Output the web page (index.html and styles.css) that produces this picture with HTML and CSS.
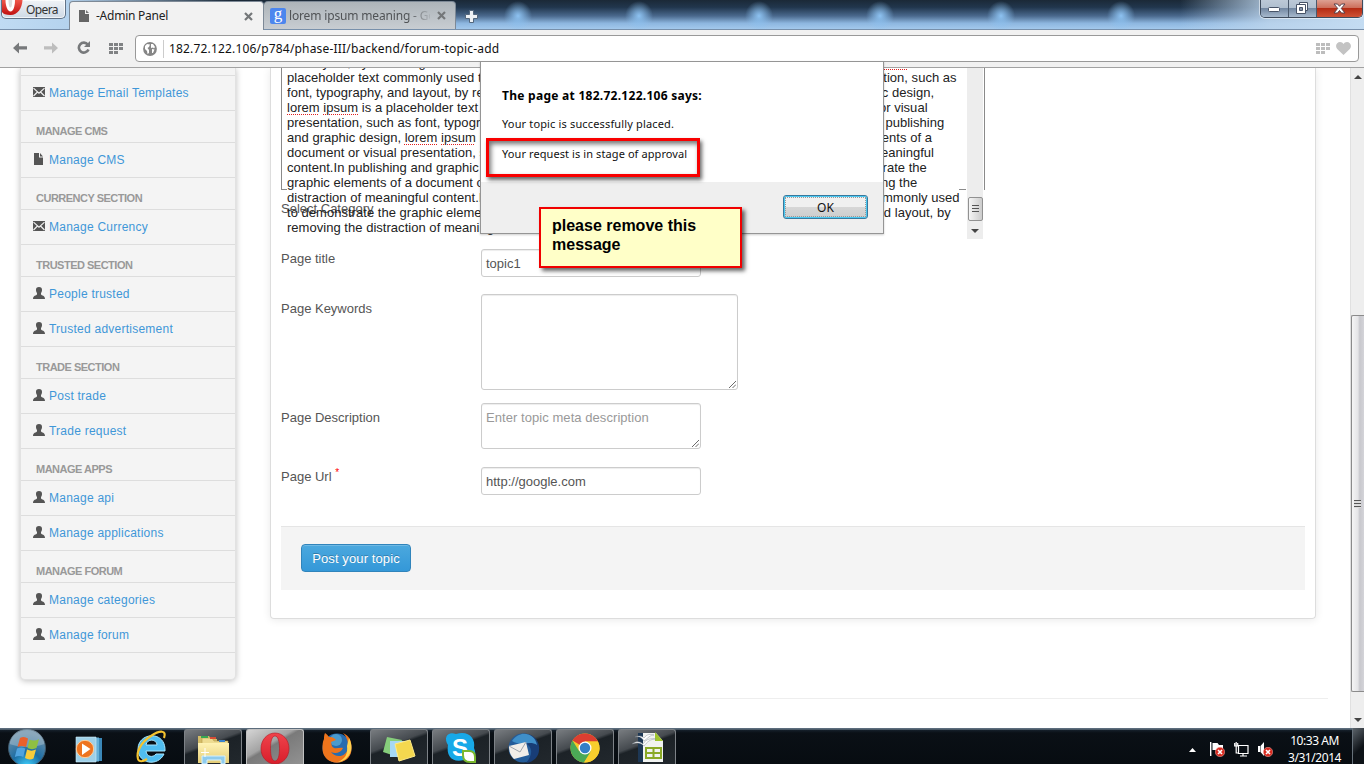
FILE: index.html
```html
<!DOCTYPE html>
<html lang="en">
<head>
<meta charset="utf-8">
<title>-Admin Panel</title>
<link rel="stylesheet" href="styles.css">
</head>
<body>
<svg class="defs" width="0" height="0">
  <defs>
    <symbol id="user" viewBox="0 0 12 12"><path d="M6 0C8 0 9.200 1 9 3c0 1.500-.5 2.300-1 3v1.500c.7 1 4 1 4 4.500H0c0-3.500 3.300-3.500 4-4.500V6c-.5-.7-1-1.500-1-3C2.800 1 4 0 6 0z"/></symbol>
    <symbol id="mail" viewBox="0 0 12 10"><path d="M0 0h12v10H0z"/><path d="M.5 1.200L6 6.200l5.500-5M.5 9l4-4M11.500 9l-4-4" stroke="#f4f4f4" stroke-width="1.100" fill="none"/></symbol>
    <symbol id="file" viewBox="0 0 12 12"><path d="M1 0h5v4.500h4V12H1z"/><path d="M7 0l3 3.500H7z"/></symbol>
    <symbol id="grid" viewBox="0 0 14 11"><path d="M0 0h4v3H0zM5 0h4v3H5zM10 0h4v3h-4zM0 4h4v3H0zM5 4h4v3H5zM10 4h4v3h-4zM0 8h4v3H0zM5 8h4v3H5z"/></symbol>
    <symbol id="close" viewBox="0 0 9 9"><path d="M1 1l7 7M8 1L1 8" stroke="#747779" stroke-width="2.200"/></symbol>
    <symbol id="bad" viewBox="0 0 10 10"><circle cx="5" cy="5" r="4.700" fill="#d92b20" stroke="#f5b5ae" stroke-width=".5"/><path d="M3 3l4 4M7 3L3 7" stroke="#fff" stroke-width="1.600"/></symbol>
    <linearGradient id="red" x2="0" y2="1"><stop stop-color="#f0574a"/><stop offset="1" stop-color="#c01010"/></linearGradient>
    <linearGradient id="opera-o" x2="0" y2="1"><stop stop-color="#f0434b"/><stop offset="1" stop-color="#d81e2b"/></linearGradient>
    <radialGradient id="orb" cx=".5" cy="1" r=".9"><stop stop-color="#3fd2ff"/><stop offset=".45" stop-color="#1c6da4"/><stop offset="1" stop-color="#6b8fa8"/></radialGradient>
    <linearGradient id="folder" x2="0" y2="1"><stop stop-color="#fff3b4"/><stop offset="1" stop-color="#e5cd77"/></linearGradient>
  </defs>
</svg>

<header class="titlebar">
  <div class="opera-menu">
    <svg width="21" height="17" viewBox="0 0 21 17"><path d="M0 0h20.500C20 8 16 15 8.500 15 4 15 1 14 0 12z" fill="url(#red)"/><path d="M3.500 0H13c0 6-1.500 11.500-4.500 11.500S3.500 6 3.500 0z" fill="#fff"/><path d="M6.500 0h3.700c0 4-.5 7.500-1.800 7.500S6.500 4 6.500 0z" fill="#ddd"/></svg>
    <span>Opera</span>
  </div>
  <div class="tab tab-active">
    <svg width="10" height="12" viewBox="0 0 10 12"><path d="M0 0h6v4h4v8H0z" fill="#666"/><path d="M7 0l3 3H7z" fill="#777"/></svg>
    <span class="tab-name">-Admin Panel</span>
    <svg width="9" height="9"><use href="#close"/></svg>
  </div>
  <div class="tab tab-back">
    <span class="google">g</span>
    <span class="tab-name">lorem ipsum meaning - Go</span>
    <svg width="9" height="9"><use href="#close"/></svg>
  </div>
  <svg class="plus" width="13" height="13" viewBox="0 0 13 13"><path d="M4.500 .5h4v4h4v4h-4v4h-4v-4h-4v-4h4z" fill="#eef2f6" stroke="#53677d"/></svg>
  <div class="window-buttons">
    <i><svg width="13" height="6"><rect x=".5" y=".5" width="11" height="4" rx="1" fill="#fff" stroke="#485468"/></svg></i>
    <i><svg width="13" height="12" viewBox="0 0 13 12"><path d="M3.500 .5h8v8h-8z" fill="#fff" stroke="#485468"/><path d="M.5 2.500h9v9h-9z" fill="#fff" stroke="#485468"/><path d="M3.500 5.500h3v3h-3z" fill="#8794a8" stroke="#485468"/></svg></i>
    <i class="win-close"><svg width="13" height="11" viewBox="0 0 13 11"><path d="M1 1h3.500l2 2.300L8.500 1H12L8.300 5.400 12 10H8.500l-2-2.500-2 2.500H1l3.700-4.600z" fill="#fff" stroke="#59414b"/></svg></i>
  </div>
</header>

<nav class="toolbar">
  <svg class="back" width="14" height="12" viewBox="0 0 14 12"><path d="M0 6l6-5.500v3.700h8v3.300H6v4z" fill="#77797b"/></svg>
  <svg class="forward" width="14" height="12" viewBox="0 0 14 12"><path d="M14 6L8 .5v3.700H0v3.300h8v4z" fill="#bdbdbd"/></svg>
  <svg class="reload" width="14" height="13" viewBox="0 0 14 13"><path d="M10.800 3.500A5 5 0 1 0 11.500 8.500" fill="none" stroke="#77797b" stroke-width="2.600"/><path d="M13 0v6H7z" fill="#77797b"/></svg>
  <svg class="dial" width="14" height="11" fill="#808284"><use href="#grid"/></svg>
  <div class="address">
    <svg width="14" height="14" viewBox="0 0 14 14"><circle cx="7" cy="7" r="6.900" fill="#868686"/><path d="M2 4l2-2 3 .5L6 5 4.500 6 6 8v3L4.500 12 4 9 2 7zM8 2h2l2 3-1 1.500-1-1-2 .5zM9 7l2.500.5L10 11H9z" fill="#fff"/></svg>
    <b class="divider"></b>
    <span class="url">182.72.122.106/p784/phase-III/backend/forum-topic-add</span>
    <svg width="14" height="11" fill="#bdbdbd"><use href="#grid"/></svg>
    <svg class="heart" width="15" height="13" viewBox="0 0 15 13"><path d="M7.500 13L1.200 7C-1.500 3.500 1 0 4 0c1.700 0 2.800.8 3.500 2C8.200.8 9.300 0 11 0c3 0 5.500 3.500 2.800 7z" fill="#c3c3c3"/></svg>
  </div>
</nav>

<div class="viewport">
  <div class="page">
    <div class="columns">
      <aside class="sidebar">
        <h3 class="cut"></h3>
        <a><svg class="mail"><use href="#mail"/></svg>Manage Email Templates</a>
        <h3>MANAGE CMS</h3>
        <a><svg><use href="#file"/></svg>Manage CMS</a>
        <h3>CURRENCY SECTION</h3>
        <a><svg class="mail"><use href="#mail"/></svg>Manage Currency</a>
        <h3>TRUSTED SECTION</h3>
        <a><svg><use href="#user"/></svg>People trusted</a>
        <a><svg><use href="#user"/></svg>Trusted advertisement</a>
        <h3>TRADE SECTION</h3>
        <a><svg><use href="#user"/></svg>Post trade</a>
        <a><svg><use href="#user"/></svg>Trade request</a>
        <h3>MANAGE APPS</h3>
        <a><svg><use href="#user"/></svg>Manage api</a>
        <a><svg><use href="#user"/></svg>Manage applications</a>
        <h3>MANAGE FORUM</h3>
        <a><svg><use href="#user"/></svg>Manage categories</a>
        <a><svg><use href="#user"/></svg>Manage forum</a>
      </aside>

      <main class="panel">
        <div class="editor">
          <div class="editor-text">and layout, by removing the distraction of meaningful content.In publishing and graphic design, <u>lorem</u> <u>ipsum</u> is a<br>placeholder text commonly used to demonstrate the graphic elements of a document or visual presentation, such as<br>font, typography, and layout, by removing the distraction of meaningful content.In publishing and graphic design,<br><u>lorem</u> <u>ipsum</u> is a placeholder text commonly used to demonstrate the graphic elements of a document or visual<br>presentation, such as font, typography, and layout, by removing the distraction of meaningful content.In publishing<br>and graphic design, <u>lorem</u> <u>ipsum</u> is a placeholder text commonly used to demonstrate the graphic elements of a<br>document or visual presentation, such as font, typography, and layout, by removing the distraction of meaningful<br>content.In publishing and graphic design, lorem ipsum is a placeholder text commonly used to demonstrate the<br>graphic elements of a document or visual presentation, such as font, typography, and layout, by removing the<br>distraction of meaningful content.In publishing and graphic design, lorem ipsum is a placeholder text commonly used<br>to demonstrate the graphic elements of a document or visual presentation, such as font, typography, and layout, by<br>removing the distraction of meaningful content.</div>
          <div class="editor-scroll"><b class="grip"></b><i class="arrow-down"></i></div>
        </div>
        <div class="field category"><label>Select Category</label></div>
        <div class="field title"><label>Page title</label><div class="input">topic1</div></div>
        <div class="field keywords"><label>Page Keywords</label><div class="input"><svg class="resize" viewBox="0 0 8 8"><path d="M0 8l8-8M4 8l4-4"/></svg></div></div>
        <div class="field description"><label>Page Description</label><div class="input hint">Enter topic meta description<svg class="resize" viewBox="0 0 8 8"><path d="M0 8l8-8M4 8l4-4"/></svg></div></div>
        <div class="field link"><label>Page Url <sup>*</sup></label><div class="input">http://google.com</div></div>
        <div class="actions"><div class="post">Post your topic</div></div>
      </main>
    </div>
    <hr class="rule">
  </div>
  <div class="scrollbar"><i class="arrow-up"></i><div class="thumb"><b></b></div><i class="arrow-down"></i></div>
</div>

<section class="dialog">
  <div class="dialog-body">
    <h2>The page at 182.72.122.106 says:</h2>
    <p class="placed">Your topic is successfully placed.</p>
    <p class="approval">Your request is in stage of approval</p>
  </div>
  <div class="dialog-foot"><div class="ok"><span>OK</span></div></div>
</section>
<div class="highlight"></div>
<div class="note">please remove this<br>message</div>

<footer class="taskbar">
  <div class="start"><svg width="40" height="36" viewBox="0 0 40 36"><circle cx="20" cy="20" r="18.500" fill="url(#orb)" stroke="#405869"/><path d="M2.500 16C5-4 35-4 37.500 16c-11 4-24 4-35 0z" fill="#b4c7d4" opacity=".45"/><path d="M13 10c3-1.500 5.500-1 8 .5l-2 8.500c-3-1.500-5.500-1.500-8.500 0z" fill="#e9602c"/><path d="M22.500 11.500c3 1.500 6 1.500 9.500-.5l-2.500 9c-3 1.500-6 1.500-9 0z" fill="#8fc043"/><path d="M10 20.500c3-1.500 5.500-1.500 8.300 0l-2 8.500c-2.500-1.500-5.500-1.500-8.500 0z" fill="#50a3df"/><path d="M20 21.500c3 1.500 6 1.500 9 0l-2.500 9c-3 1.500-6 1-8.500-.5z" fill="#f9cc3c"/></svg></div>
  <div class="task"><svg viewBox="0 0 40 36"><path d="M12 10h21v23H12z" fill="#3b88b8"/><path d="M10 9.500h20v24H10z" fill="#65b0d8"/><path d="M7 9h20v25H7z" fill="#9ed0e8" stroke="#d2edf8" stroke-width=".6"/><circle cx="16" cy="21" r="8.700" fill="#ee7420" stroke="#fbd0a1"/><path d="M13 15.500l8.500 5.500-8.500 6z" fill="#fff"/></svg></div>
  <div class="task"><svg viewBox="0 0 40 36"><path d="M34 23H15c.5 6 7 7 10 3h8c-6 13-26 10-26-5C7 4 35 2 34 23zM15 17h11c0-6-10-7-11 0z" fill="#50bdf0" stroke="#a6e6ff"/><path d="M33 10c3-8-4-8-13-2C10 14 5 24 7 31c1 3 5 3 9 0" fill="none" stroke="#f5c32f" stroke-width="2.200"/></svg></div>
  <div class="task open"><svg viewBox="0 0 40 36"><path d="M5 8h11l2 3h6v22H5z" fill="#d4bc67"/><path d="M9 10h10l2 3h14v20H9z" fill="#eedc91" stroke="#b69c4a" stroke-width=".6"/><path d="M8 8h7v2H8z" fill="#38a852"/><path d="M17 9h6v2h-6z" fill="#d64d35"/><path d="M26 12h6v2h-6z" fill="#3b83cb"/><path d="M5 15h31v20H5z" fill="url(#folder)"/><path d="M9 36v-8h23v8h-4v-4H14v4z" fill="#8fcbed" stroke="#d4f1ff"/><path d="M12 20v9M8 24.500h8" stroke="#fff"/></svg></div>
  <div class="task open active"><svg viewBox="0 0 40 36"><path fill-rule="evenodd" d="M20 5C12 5 6 12 6 20.500S12 36 20 36s14-7 14-15.500S28 5 20 5zm0 3c3 0 4.500 5 4.500 12.500S23 33 20 33s-4.500-5-4.500-12.500S17 8 20 8z" fill="url(#opera-o)" stroke="#b51722" stroke-width=".6"/></svg></div>
  <div class="task"><svg viewBox="0 0 40 36"><circle cx="20" cy="20" r="14.500" fill="#276caf"/><circle cx="19" cy="12" r="6" fill="#60b5df" opacity=".65"/><path d="M7 11c0-2 0-4 1-6 2 1 3 3 4 4 3-.5 6 1 7 3l-5 2c1 3 0 4 3 6 3 1 6-1 9 0-2 5-8 6-12 4 5 7 17 5 17-6 0-6-2-10-5-13 7 3 9 9 8.500 17C33 39 6 39 5.500 21c0-4 0-7 1.500-10z" fill="#ed741c"/><path d="M32 10c6 11 0 23-11 24 7-3 10-8 9-16z" fill="#ffd34f"/></svg></div>
  <div class="task open"><svg viewBox="0 0 40 36"><path d="M8 9l15 3-4 17L4 24z" fill="#86ce7c"/><path d="M11 13h16v16H11z" fill="#a6d8f5"/><path d="M16 16l15-4 5 16-16 5z" fill="#f4d84f" stroke="#ffeb87"/></svg></div>
  <div class="task open"><svg viewBox="0 0 40 36"><path d="M7 17C2 9 7 3 15 6c12-4 20 4 18 14 4 9-2 15-10 12C11 35 5 28 7 17z" fill="#18a9e8"/><text x="19" y="28" text-anchor="middle" class="skype-s">S</text><path d="M22 27v-4h6c4 0 6 2 6 6v5h-5c-4 0-7-2-7-7z" fill="#fff" stroke="#7ab82e" stroke-width="2"/></svg></div>
  <div class="task open"><svg viewBox="0 0 40 36"><circle cx="20" cy="20" r="14.500" fill="#245c99"/><path d="M10 12C20-1 38 8 36 22c0 6-5 12-13 13 8-9 6-17-1-20-5-2-8-1-12-3z" fill="#183d76"/><path d="M9 13C17 1 32 5 34 17c-7-5-16 2-25-4z" fill="#3f8fc9"/><path d="M6 18l17-4 3 13-15 4c-4-4-5-8-5-13z" fill="#f1eee9"/><path d="M6 18l11 6 6-10" fill="none" stroke="#9fa5ac"/></svg></div>
  <div class="task open"><svg viewBox="0 0 40 36"><circle cx="20" cy="20" r="14.500" fill="#f5c729"/><path d="M20 20L7.500 12.500A14.500 14.500 0 0 1 33 13.500H20z" fill="#dc3e31"/><path d="M7.500 12.500A14.500 14.500 0 0 0 19 34.500L26 23l-12 0z" fill="#4ba956"/><path d="M33 13.500H20V20l6 4-7 10.500A14.500 14.500 0 0 0 33 13.500z" fill="#f8cf2d"/><circle cx="20" cy="20" r="6.500" fill="#fff"/><circle cx="20" cy="20" r="5.200" fill="#347fc7"/></svg></div>
  <div class="task open"><svg viewBox="0 0 40 36"><path d="M11 5h9v29h-9z" fill="#1d3754"/><path d="M16 5h13l7 8v21H16z" fill="#f1f3f1"/><path d="M28 4l8 9h-8z" fill="#9fc52b"/><path d="M19 20h15v10H19zM19 25h15M26.500 20v10" fill="none" stroke="#8aa927" stroke-width="2"/><path d="M5 16c5-4 9-2 11 0 3-5 8-6 13-5-6 0-9 3-12 7-3-3-6-4-12-2zM8 9c4-2 7-1 9 1 3-4 6-4 10-3-4 0-6 3-10 6-2-3-4-5-9-4z" fill="#fff" stroke="#77818b" stroke-width=".4"/></svg></div>
  <div class="tray">
    <svg class="tray-arrow" width="7" height="4" viewBox="0 0 7 4"><path d="M0 4l3.500-4L7 4z" fill="#fff"/></svg>
    <svg width="15" height="15" viewBox="0 0 15 15"><path d="M.7 0v14" stroke="#fff" stroke-width="1.400"/><path d="M2.500 1h5l1.500 2h4v7H8L7 8H2.500z" fill="#fff"/><use href="#bad" x="5" y="5" width="10" height="10"/></svg>
    <svg width="15" height="15" viewBox="0 0 15 15"><path d="M4.500 3.500H14v8H4.500zM9 12v2M6 14h7M.7 1v3h3V1M2.200 0v11H4" fill="none" stroke="#fff" stroke-width="1.200"/></svg>
    <svg width="15" height="15" viewBox="0 0 15 15"><path d="M0 4h2v6H0zM2.500 4L6 0v14l-3.500-4z" fill="#fff"/><use href="#bad" x="5" y="5" width="10" height="10"/></svg>
  </div>
  <div class="clock"><span class="time">10:33 AM</span><span class="date">3/31/2014</span></div>
  <div class="show-desktop"></div>
</footer>
</body>
</html>
```
FILE: styles.css
```css
* { box-sizing: border-box; }
body { margin: 0; width: 1364px; height: 764px; overflow: hidden; position: relative; display: flex; flex-direction: column; background: #fff; font-family: "Liberation Sans", Arial, sans-serif; font-size: 13px; color: #555; }
svg { display: block; flex: none; }
.defs { position: absolute; }

.titlebar { height: 30px; flex: none; display: flex; border-bottom: 1px solid #7890ab; font-family: "Noto Sans", "Open Sans", sans-serif; font-size: 12px;
  background:
    linear-gradient(90deg, #c0dbf3 0, #b5d3ee 66px, rgba(160,195,229,0) 230px, rgba(160,195,229,0) 1030px, rgba(173,198,222,.75) 1130px, #bed6ed 1364px),
    radial-gradient(ellipse 14px 15px at 518px 16px, #8dc2f1, rgba(141,194,241,0)),
    radial-gradient(ellipse 14px 15px at 639px 16px, #8dc2f1, rgba(141,194,241,0)),
    radial-gradient(ellipse 14px 15px at 759px 16px, #8dc2f1, rgba(141,194,241,0)),
    radial-gradient(ellipse 14px 15px at 880px 16px, #8dc2f1, rgba(141,194,241,0)),
    radial-gradient(ellipse 14px 15px at 1001px 16px, #8dc2f1, rgba(141,194,241,0)),
    radial-gradient(ellipse 14px 15px at 1121px 16px, #8dc2f1, rgba(141,194,241,0)),
    linear-gradient(#1b2937 0, #21364d 25%, #4a698d 55%, #8db6df 80%, #a3c9ed);
  background:
    linear-gradient(90deg, #c0dbf3 0, #b5d3ee 66px, rgba(160,195,229,0) 230px, rgba(160,195,229,0) 1180px, rgba(190,214,237,.85) 1270px, #c4dcf2 1364px),
    radial-gradient(ellipse 14px 15px at 518px 16px, #8dc2f1, rgba(141,194,241,0)),
    radial-gradient(ellipse 14px 15px at 639px 16px, #8dc2f1, rgba(141,194,241,0)),
    radial-gradient(ellipse 14px 15px at 759px 16px, #8dc2f1, rgba(141,194,241,0)),
    radial-gradient(ellipse 14px 15px at 880px 16px, #8dc2f1, rgba(141,194,241,0)),
    radial-gradient(ellipse 14px 15px at 1001px 16px, #8dc2f1, rgba(141,194,241,0)),
    radial-gradient(ellipse 14px 15px at 1121px 16px, #8dc2f1, rgba(141,194,241,0)),
    linear-gradient(#1b2937 0, #21364d 25%, #4a698d 55%, #8db6df 80%, #a3c9ed); }
.opera-menu { width: 65px; height: 19px; margin-left: 1px; display: flex; border: 1px solid #617286; border-top: 0; border-radius: 0 0 5px 5px; background: linear-gradient(#f0f3f6, #ced9e5); box-shadow: inset 0 0 0 1px rgba(255,255,255,.7); color: #333; }
.opera-menu span { margin-left: 3px; line-height: 19px; letter-spacing: -.6px; white-space: nowrap; }
.tab { display: flex; align-items: center; border: 1px solid #7d8996; border-bottom: 0; border-radius: 4px 4px 0 0; }
.tab-name { flex: 1; white-space: nowrap; overflow: hidden; line-height: 20px; }
.tab-active { margin: 1px 0 -1px 3px; width: 195px; padding: 0 10px 0 9px; background: #f2f2f2; color: #222; position: relative; }
.tab-active .tab-name { margin-left: 7px; letter-spacing: -.25px; }
.tab-back { margin-top: 1px; width: 192px; padding: 0 9px 0 6px; background: linear-gradient(#adb4b9, #c8cdd2); color: #505356; border-left: 0; }
.tab-back .tab-name { margin: 0 7px 0 3px; -webkit-mask-image: linear-gradient(90deg, #000 118px, transparent 144px); mask-image: linear-gradient(90deg, #000 118px, transparent 144px); letter-spacing: -.16px; }
.google { width: 16px; height: 16px; border-radius: 2px; background: #4c86ee; color: #fff; font: 17px/12px "Liberation Serif", serif; text-align: center; }
.plus { margin: 10px 0 0 9px; }
.window-buttons { margin: 0 1px 0 auto; width: 103px; height: 18px; display: flex; border: 1px solid #3e4b5c; border-top: 0; border-radius: 0 0 5px 5px; overflow: hidden; box-shadow: 0 0 0 1px rgba(255,255,255,.5); }
.window-buttons i { width: 28px; display: flex; justify-content: center; align-items: center; padding-bottom: 1px; border-right: 1px solid #4b5a6d; background: linear-gradient(#bcc9d7 0, #b0bfcf 45%, #7388a2 50%, #a7b9cd); }
.window-buttons i:first-child { align-items: flex-end; padding-bottom: 4px; }
.window-buttons .win-close { flex: 1; border: 0; background: linear-gradient(#dda092, #cd6f5c 45%, #b52b14 50%, #cf5235); }

.toolbar { height: 38px; flex: none; display: flex; align-items: flex-start; padding: 5px 5px 0 13px; background: #f1f1f1; border-bottom: 1px solid #a2a2a2; }
.back { margin-top: 7px; }
.forward { margin: 7px 0 0 17px; }
.reload { margin: 6px 0 0 19px; }
.dial { margin: 8px 12px 0 18px; }
.address { flex: 1; height: 27px; display: flex; align-items: center; padding: 0 7px; border: 1px solid #999; border-radius: 4px; background: #fff; }
.divider { width: 1px; height: 18px; margin: 0 5px 0 6px; background: #ccc; }
.url { flex: 1; font: 12px "Noto Sans", "Open Sans", sans-serif; color: #111; letter-spacing: .175px; }
.heart { margin-left: 6px; }

.viewport { height: 660px; flex: none; display: flex; overflow: hidden; }
.page { flex: 1; min-width: 0; padding-left: 20px; }
.columns { display: flex; gap: 34px; height: 630px; align-items: flex-start; }
.sidebar { width: 216px; height: 612px; flex: none; background: #f4f4f4; border: 1px solid #e2e2e2; border-top: 0; border-radius: 0 0 5px 5px; box-shadow: 0 1px 6px rgba(0,0,0,.25); }
.sidebar h3 { margin: 0; height: 32px; padding: 8px 0 0 15px; border-bottom: 1px solid #ddd; font-size: 11px; line-height: 24px; color: #999; letter-spacing: -.5px; }
.sidebar .cut { height: 8px; padding: 0; }
.sidebar a { height: 35px; display: flex; align-items: center; padding-left: 12px; border-bottom: 1px solid #ddd; font-size: 12px; letter-spacing: .24px; color: #3f97d8; }
.sidebar a svg { width: 12px; height: 12px; margin: -2px 4px 0 0; fill: #555; }
.sidebar a .mail { height: 10px; }
.panel { width: 1046px; height: 551px; border: 1px solid #ddd; border-top: 0; border-radius: 0 0 4px 4px; box-shadow: 0 1px 8px rgba(0,0,0,.09); padding: 0 10px; display: flex; flex-direction: column; }
.editor { position: relative; height: 122px; width: 704px; flex: none; border: 1px solid #8a8a8a; border-width: 0 1px; background: linear-gradient(90deg, #8a8a8a 5px, transparent 5px, transparent 677px, #8a8a8a 677px, #8a8a8a 684px, transparent 684px) bottom / 100% 1px no-repeat; }
.editor-text { position: absolute; left: 5px; top: -13px; width: 678px; line-height: 15px; color: #222; white-space: nowrap; letter-spacing: .03px; clip-path: inset(13px 0 -10px 0); }
.editor-text u { text-decoration: underline dotted #e02020 1px; text-underline-offset: 2px; }
.editor-scroll { position: absolute; right: 1px; top: 0; width: 16px; height: 171px; display: flex; flex-direction: column; align-items: center; justify-content: flex-end; background: #ededed; }
.grip { width: 15px; height: 24px; border: 1px solid #919191; border-radius: 2px; background: linear-gradient(#555, #555) 3px 7px / 7px 1px no-repeat, linear-gradient(#555, #555) 3px 10px / 7px 1px no-repeat, linear-gradient(#555, #555) 3px 13px / 7px 1px no-repeat, linear-gradient(90deg, #f5f5f5, #ccc); }
.arrow-down { border: 4px solid transparent; border-top-color: #444; border-bottom: 0; }
.arrow-up { border: 4px solid transparent; border-bottom-color: #444; border-top: 0; }
.editor-scroll .arrow-down { margin: 8px 0 6px; }
.field { display: flex; align-items: flex-start; }
.field label { width: 200px; line-height: 20px; }
.field sup { color: red; font-size: 10px; line-height: 0; }
.input { position: relative; width: 220px; height: 28px; padding: 4px; border: 1px solid #ccc; border-radius: 3px; line-height: 20px; box-shadow: inset 0 1px 1px rgba(0,0,0,.075); }
.hint { color: #999; letter-spacing: .06px; }
.resize { position: absolute; right: 1px; bottom: 1px; width: 7px; height: 7px; stroke: #555; fill: none; }
.category { margin-top: 9px; height: 50px; }
.title { height: 45px; }
.keywords { height: 109px; }
.keywords label, .description label { margin-top: 5px; }
.keywords .input { width: 257px; height: 96px; }
.description { height: 64px; }
.description .input { height: 46px; }
.link { height: 59px; }
.actions { height: 64px; padding: 17px 20px; border-top: 1px solid #e5e5e5; background: #f4f4f4; }
.post { width: 110px; height: 28px; text-align: center; line-height: 27px; border: 1px solid #3084bb; border-radius: 4px; background: linear-gradient(#4ba8de, #3498d8); color: #fff; font-size: 13px; letter-spacing: .1px; box-shadow: inset 0 1px 0 rgba(255,255,255,.2); text-shadow: 0 -1px 0 rgba(0,0,0,.25); }
.rule { margin: 0 22px 0 0; border: 0; border-top: 1px solid #eee; }
.scrollbar { width: 14px; display: flex; flex-direction: column; align-items: center; background: #eee; border-left: 1px solid #e0e0e0; }
.scrollbar .arrow-up { margin-top: 7px; }
.thumb { margin-top: 236px; width: 14px; height: 377px; display: flex; align-items: center; justify-content: center; border: 1px solid #8b8b8b; border-right: 0; border-radius: 2px 0 0 2px; background: linear-gradient(90deg, #f5f5f5, #e5e5e7 45%, #c8c8cd 60%, #d7d7dc); }
.thumb b { width: 7px; height: 8px; margin-right: 2px; background: repeating-linear-gradient(#555 0, #555 1px, #ddd 1px, #ddd 3px); }
.scrollbar .arrow-down { margin-top: 26px; }

.dialog { position: absolute; left: 480px; top: 61px; width: 404px; height: 173px; border: 1px solid #959595; background: #efefef; font-family: "Noto Sans", "Open Sans", sans-serif; color: #111; display: flex; flex-direction: column; box-shadow: 0 1px 2px rgba(0,0,0,.2); }
.dialog-body { height: 120px; padding: 24px 21px 0; background: #fff; }
.dialog h2 { margin: 0; font-size: 12px; line-height: 20px; font-weight: 700; color: #000; letter-spacing: .27px; white-space: nowrap; }
.dialog p { margin: 8px 0 0; line-height: 20px; font-size: 11px; white-space: nowrap; letter-spacing: .15px; }
.dialog p + p { margin-top: 10px; letter-spacing: .09px; }
.dialog-foot { padding: 13px 15px; display: flex; justify-content: flex-end; }
.ok { width: 85px; height: 24px; padding: 1px; border: 1px solid #38799d; border-radius: 3px; box-shadow: inset 0 0 0 1px #4bc9f2; background: linear-gradient(#f0f0f0 50%, #d7d7d7 50%, #cdcdcd); font-size: 12px; text-align: center; }
.ok span { display: block; height: 20px; border: 1px dotted #999; line-height: 19px; }
.highlight { position: absolute; left: 486px; top: 138px; width: 214px; height: 39px; border: 3px solid #f80000; box-shadow: 2px 3px 4px rgba(0,0,0,.6), inset 2px 3px 5px rgba(0,0,0,.55); }
.note { position: absolute; left: 539px; top: 207px; width: 203px; height: 61px; padding: 7px 11px; border: 2px solid #f00000; background: #ffffc8; color: #000; font-size: 16px; line-height: 19px; font-weight: 700; white-space: nowrap; box-shadow: 3px 3px 4px rgba(0,0,0,.6); }

.taskbar { height: 36px; flex: none; display: flex; gap: 4px; background: linear-gradient(#354556 0, #8294a3 1px, #15202b 2px, #0a1016 5px, #070c11); overflow: hidden; }
.start { width: 56px; padding-left: 7px; flex: none; }
.task { width: 58px; flex: none; display: flex; justify-content: center; }
.task svg { width: 40px; height: 36px; }
.open { margin-top: 1px; height: 35px; border: 1px solid #7d8287; border-bottom: 0; border-radius: 3px 3px 0 0; background: linear-gradient(160deg, #787c80 0, #454a4f 40%, #1c2227 46%, #22282d); }
.open svg { margin-top: -2px; }
.active { background: linear-gradient(150deg, #d5d5d5, #a3a3a3 40%, #7a7a7a 46%, #929292); border-color: #c1c1c1; }
.skype-s { font: bold 24px "Liberation Sans", sans-serif; fill: #fff; }
.tray { margin-left: auto; display: flex; align-items: center; gap: 9px; padding-top: 7px; }
.tray-arrow { margin-right: 5px; }
.clock { width: 67px; margin-left: 4px; display: flex; flex-direction: column; align-items: center; padding-top: 4px; font: 12px/17px "Noto Sans", "Open Sans", sans-serif; color: #fff; white-space: nowrap; letter-spacing: -.45px; }
.show-desktop { width: 12px; border-left: 1px solid #66717a; background: linear-gradient(135deg, #5c646b, #0d1217 60%); }
```
